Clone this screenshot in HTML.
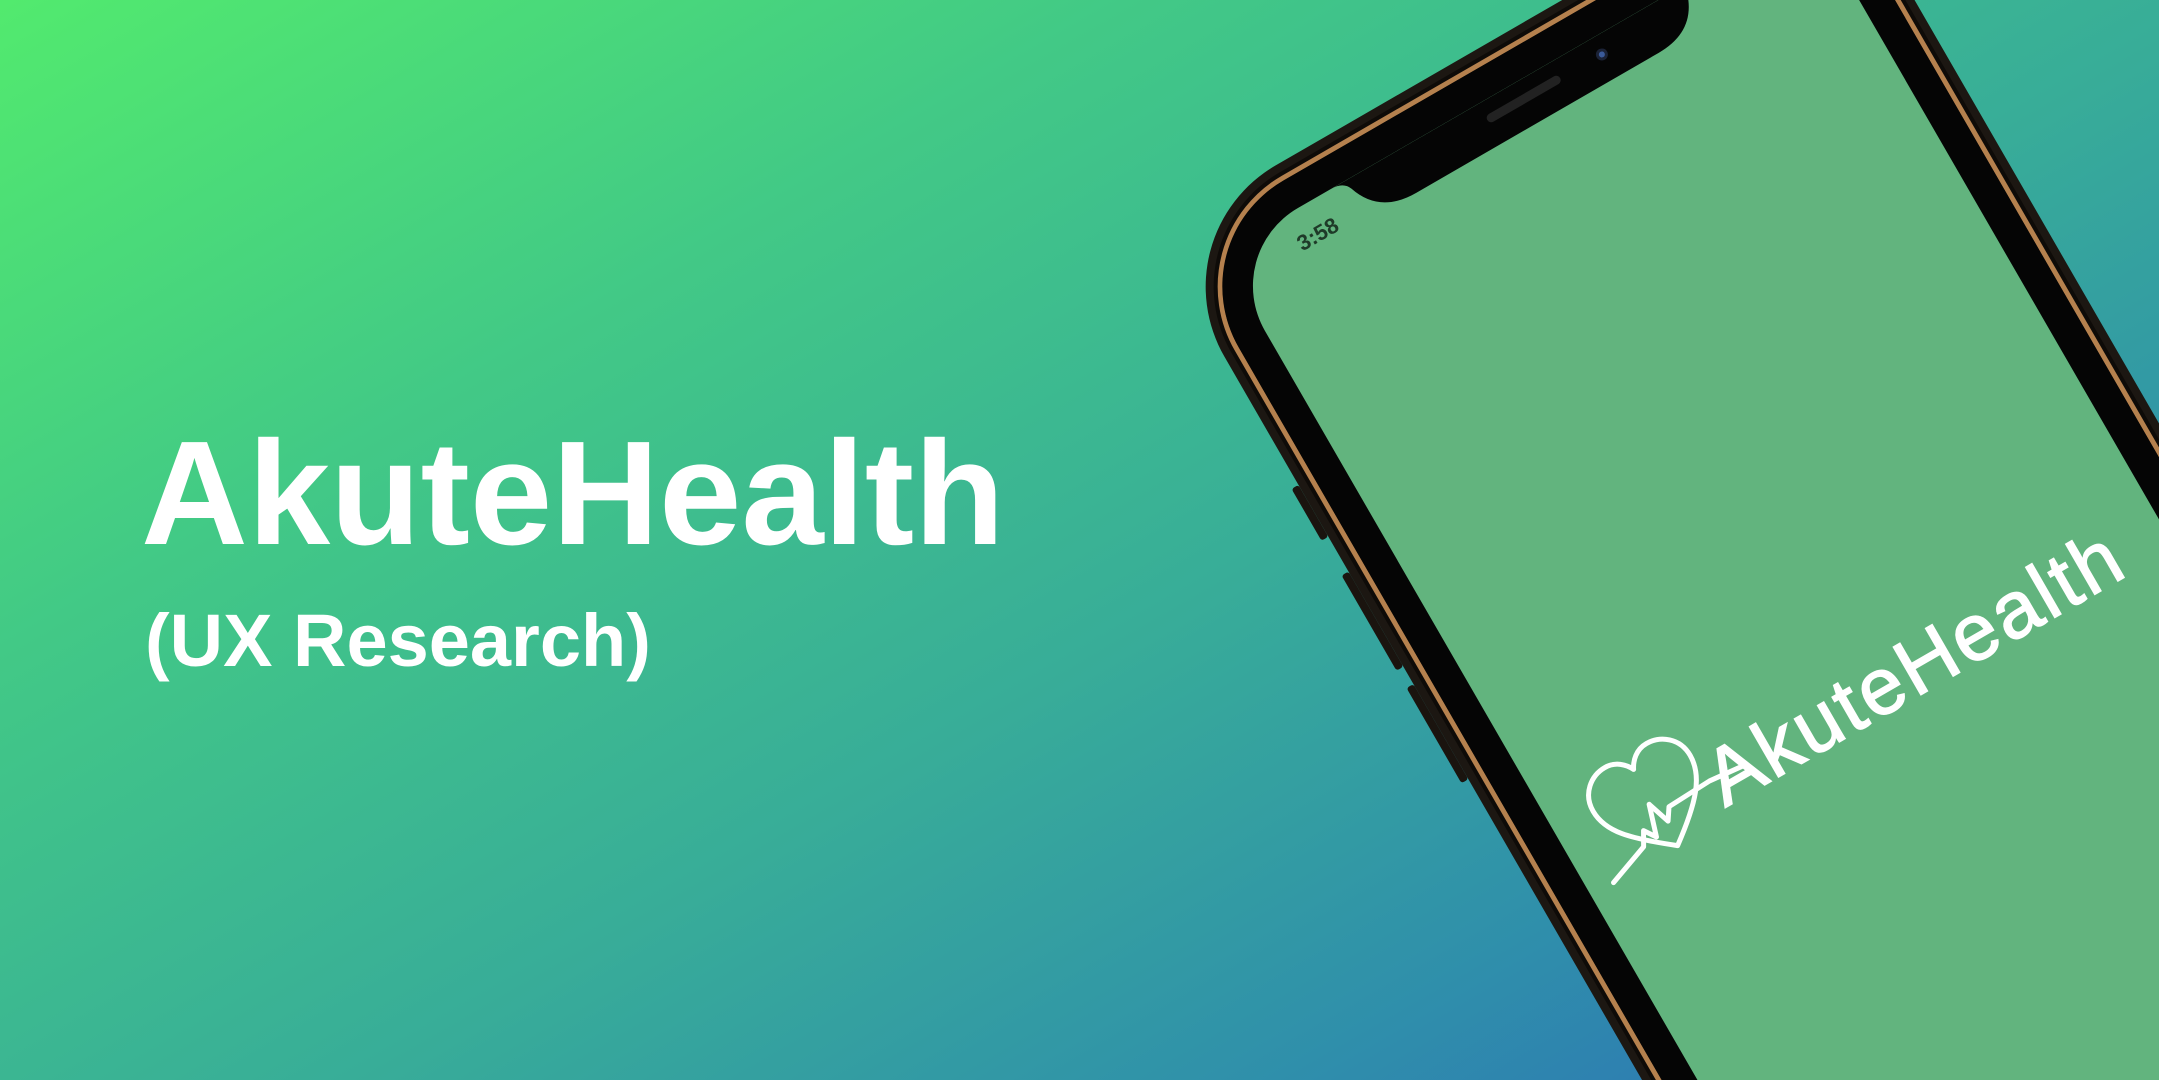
<!DOCTYPE html>
<html><head><meta charset="utf-8"><style>
html,body{margin:0;padding:0;width:2159px;height:1080px;overflow:hidden}
.wrap{position:absolute;left:0;top:0;width:2159px;height:1080px;overflow:hidden;
background:linear-gradient(150deg,#52ea6e 0%,#42c986 28%,#38ad98 55%,#2f8fab 78%,#2d6bb8 100%);
font-family:"Liberation Sans",sans-serif}
.t1{position:absolute;left:141px;top:420px;color:#fff;font-weight:bold;font-size:148px;line-height:1;white-space:nowrap}
.t2{position:absolute;left:145px;top:604px;color:#fff;font-weight:bold;font-size:74px;line-height:1;white-space:nowrap}
.ph{position:absolute;left:1220px;top:253px;width:680px;height:1300px;transform-origin:0 0;transform:rotate(-30deg)}
.l{position:absolute}
</style></head><body>
<div class="wrap">
<div class="t1">AkuteHealth</div>
<div class="t2">(UX Research)</div>
<div class="ph">
  <div class="l" style="left:-48px;top:-48px;width:776px;height:1348px;border-radius:140px;background:#1c1712"></div>
  <div class="l" style="left:-40px;top:-40px;width:760px;height:1340px;border-radius:132px;background:#0e0b08"></div>
  <div class="l" style="left:-36px;top:-36px;width:752px;height:1336px;border-radius:128px;border:5px solid #b5814e;box-sizing:border-box"></div>
  <div class="l" style="left:-31px;top:-31px;width:742px;height:1331px;border-radius:122px;background:#050505"></div>
  <div class="l" style="left:-56px;top:240px;width:8px;height:60px;background:#1a140f;border-radius:3px"></div>
  <div class="l" style="left:-56px;top:340px;width:8px;height:110px;background:#1a140f;border-radius:3px"></div>
  <div class="l" style="left:-56px;top:470px;width:8px;height:110px;background:#1a140f;border-radius:3px"></div>
  <div class="l" style="left:0;top:0;width:680px;height:1300px;border-radius:90px;background:#62b47e;overflow:hidden">
    <svg width="680" height="1000" style="position:absolute;left:0;top:0">
      <path d="M128,0 Q142,0 146,10 Q158,46 200,46 L480,46 Q522,46 534,10 Q538,0 552,0 Z" fill="#050505"/>
      <rect x="298" y="14" width="84" height="9" rx="4.5" fill="#222"/>
      <circle cx="430" cy="19" r="6" fill="#1b2236"/>
      <circle cx="430" cy="19" r="3" fill="#3a5a9a"/>
      <text x="72" y="40" font-family="Liberation Sans" font-weight="bold" font-size="22" fill="#1e3a28">3:58</text>
      <g fill="none" stroke="#fff" stroke-width="5" stroke-linecap="round" stroke-linejoin="round">
        <path d="M100,742 C62,712 44,694 44,670 C44,650 60,638 76,638 C88,638 96,646 100,654 C104,646 112,638 124,638 C140,638 156,650 156,670 C156,694 138,714 100,742 Z"/>
        <path d="M26,742 L70,726 L78,712 L86,724 L96,692 L104,716 L112,704 L160,702 L200,706"/>
      </g>
      <text x="160" y="733" font-family="Liberation Sans" font-size="80" fill="#fff" stroke="#fff" stroke-width="1.5" letter-spacing="3">AkuteHealth</text>
    </svg>
  </div>
</div>
</div>
</body></html>
